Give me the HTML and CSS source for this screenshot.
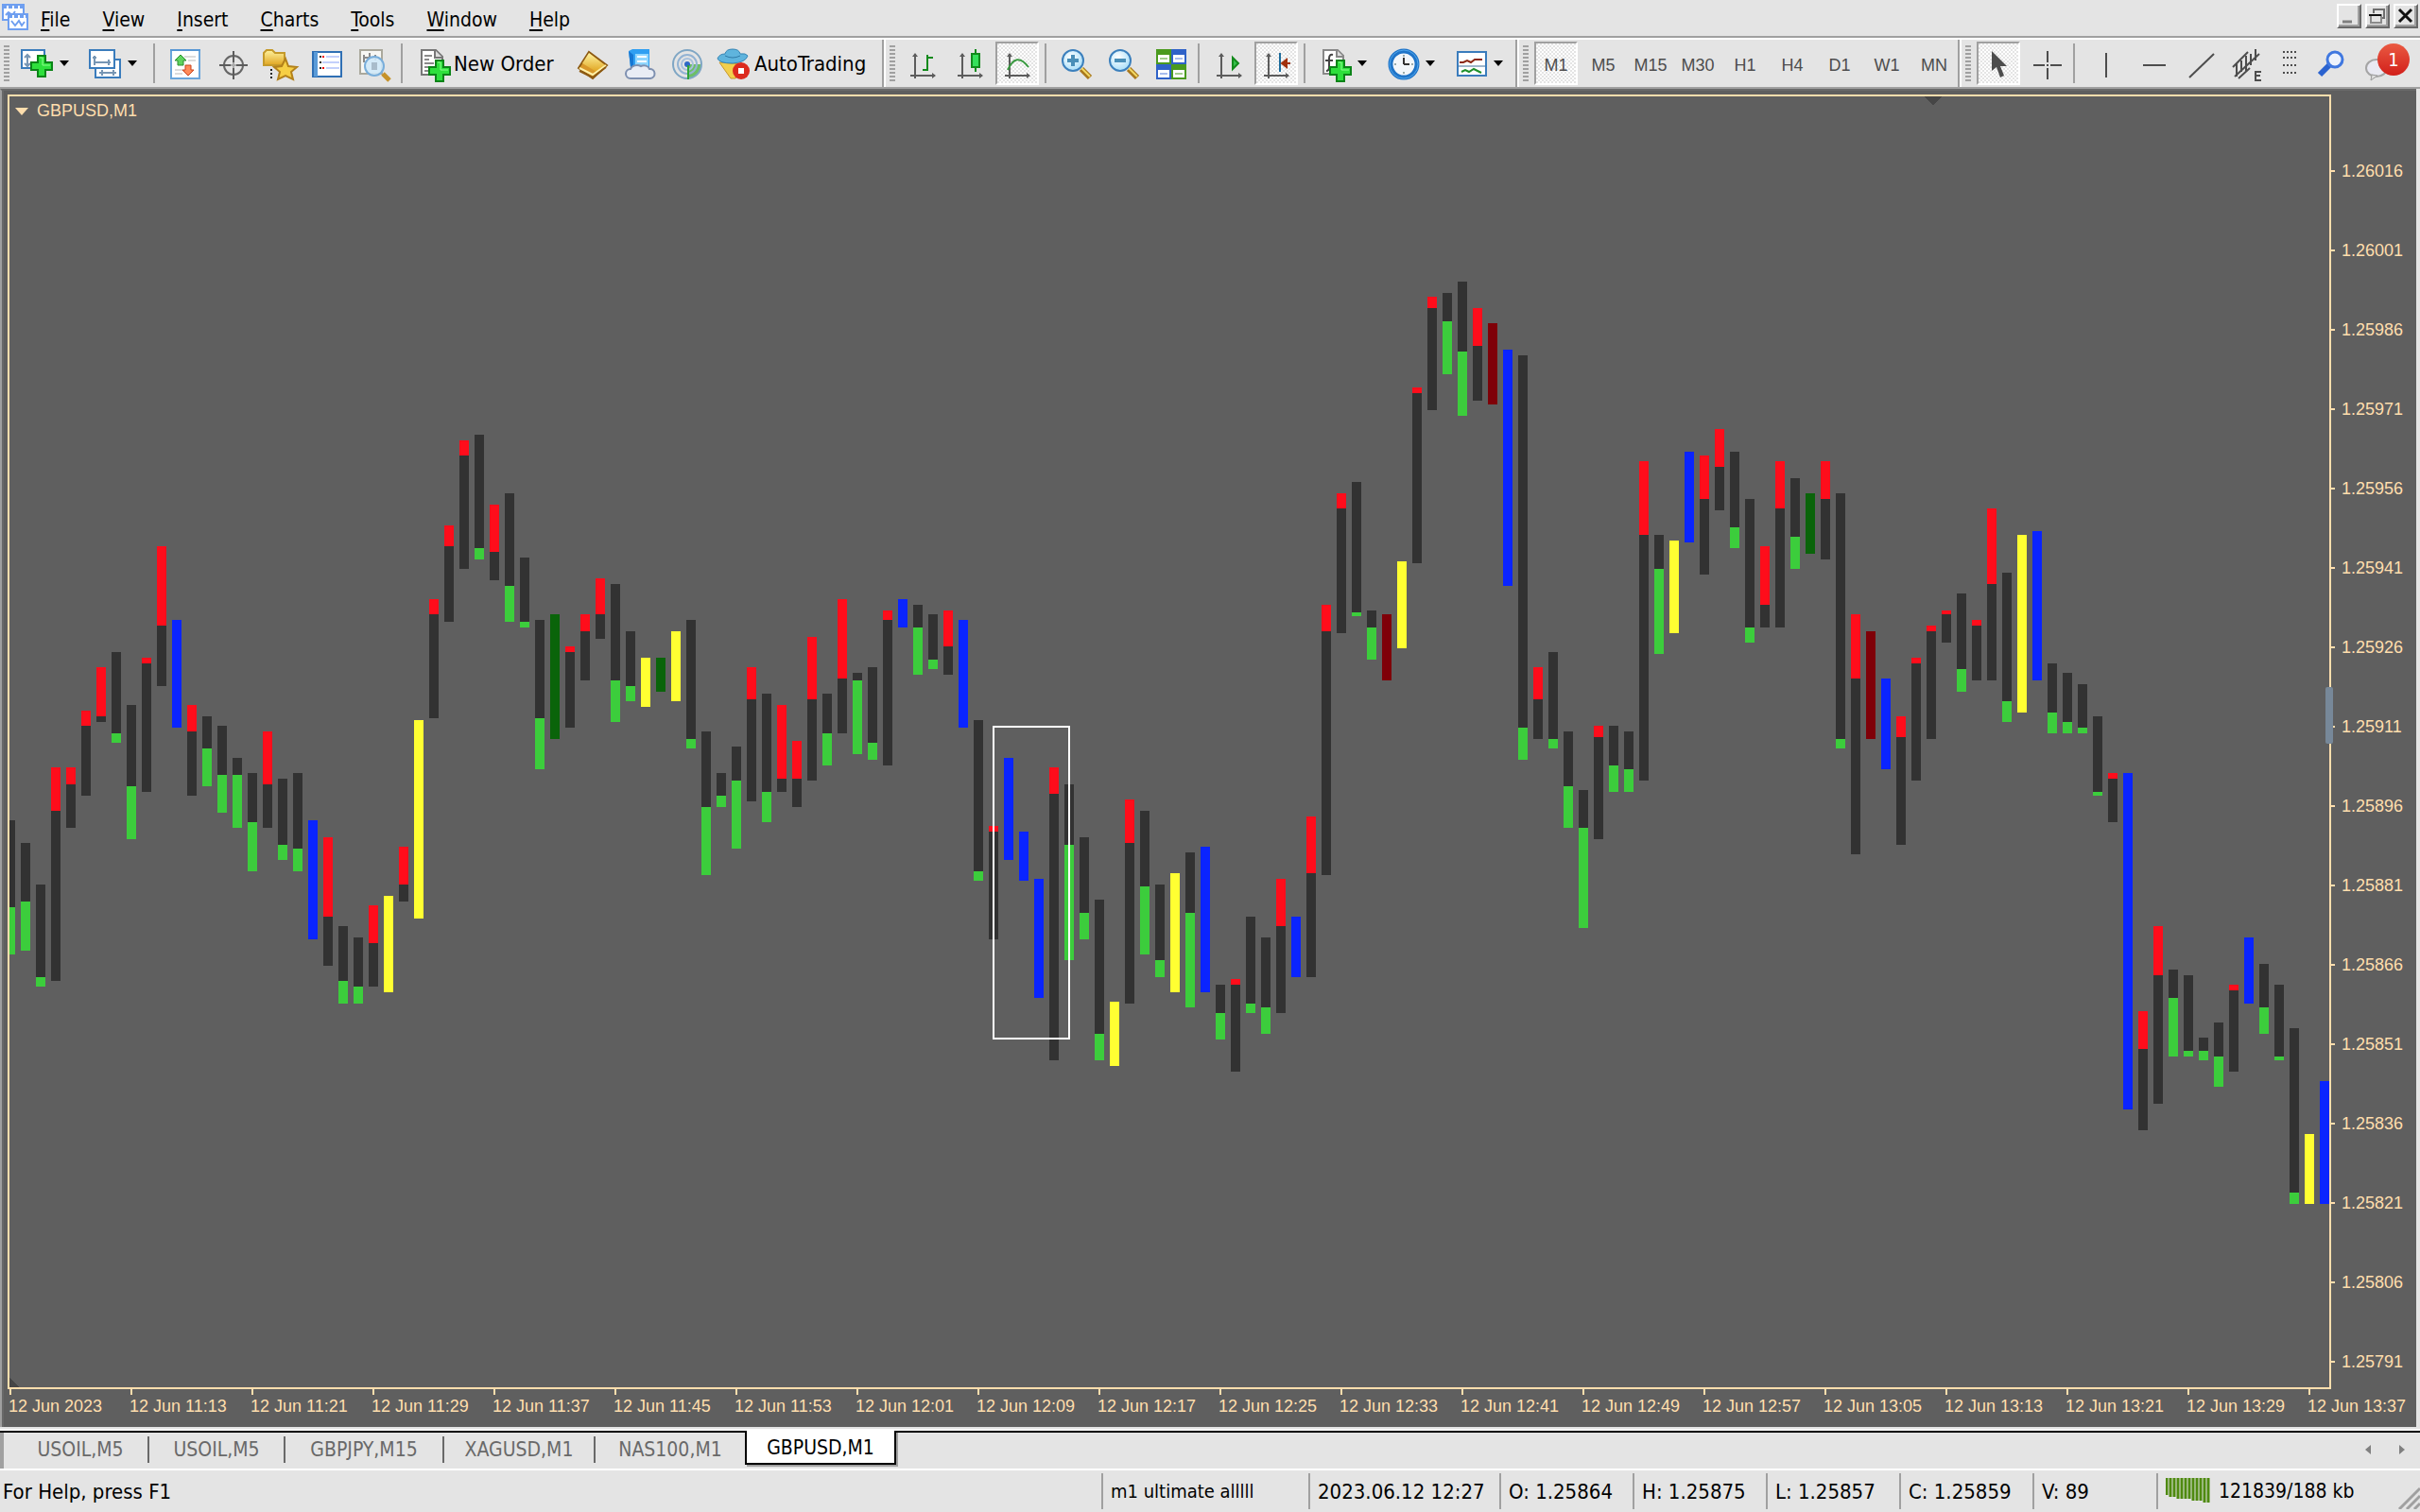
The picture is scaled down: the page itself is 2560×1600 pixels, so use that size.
FILE: index.html
```
<!DOCTYPE html>
<html lang="en">
<head>
    <meta charset="UTF-8">
    <meta name="viewport" content="width=device-width, initial-scale=1.0">
    <title>GBPUSD,M1</title>
    <link rel="stylesheet" href="styles.css">
</head>
<body>

    <!-- shared icon parts -->
    <svg class="defs" width="0" height="0">
        <defs>
            <linearGradient id="blueBar" x1="0" y1="0" x2="1" y2="0">
                <stop offset="0" stop-color="#6fb0e8"/>
                <stop offset="1" stop-color="#2f6fb4"/>
            </linearGradient>
            <linearGradient id="gold" x1="0" y1="0" x2="0" y2="1">
                <stop offset="0" stop-color="#fff3a0"/>
                <stop offset="1" stop-color="#e0a520"/>
            </linearGradient>
            <radialGradient id="lens" cx="0.4" cy="0.35" r="0.7">
                <stop offset="0" stop-color="#ffffff"/>
                <stop offset="1" stop-color="#a5ddf8"/>
            </radialGradient>
            <symbol id="plus" viewBox="0 0 24 24">
                <path d="M8 1h8v7h7v8h-7v7H8v-7H1V8h7z" fill="#2ee03c" stroke="#0b8418" stroke-width="2"/>
                <path d="M10 3h3v8h8" fill="none" stroke="#8dff8d" stroke-width="1"/>
            </symbol>
            <symbol id="axes" viewBox="0 0 36 36">
                <path d="M10 8v26M5 31h26" fill="none" stroke="#5c5c5c" stroke-width="2"/>
                <path d="M7 11l3-4 3 4zM28 28l4 3-4 3z" fill="#5c5c5c"/>
            </symbol>
            <symbol id="magnifier" viewBox="0 0 36 36">
                <path d="M24 24l9 9" stroke="#a9781c" stroke-width="6"/>
                <path d="M24 23l9 9" stroke="#f3d964" stroke-width="2"/>
                <circle cx="15" cy="15" r="11" fill="url(#lens)" stroke="#3c80bd" stroke-width="2"/>
            </symbol>
        </defs>
    </svg>

    <header class="menubar">
        <svg class="app-icon" width="32" height="36" viewBox="0 0 32 36">
            <rect x="3" y="5" width="22" height="16" fill="#fff" stroke="#6f9ff0" stroke-width="2"/>
            <path d="M3 7h22" stroke="#6f9ff0" stroke-width="4" stroke-dasharray="4 2"/>
            <path d="M6 16l3-3 4 3 3-4" fill="none" stroke="#6f9ff0" stroke-width="2"/>
            <rect x="9" y="15" width="20" height="16" fill="#fff" stroke="#6f9ff0" stroke-width="2"/>
            <path d="M9 17h20" stroke="#6f9ff0" stroke-width="4" stroke-dasharray="4 2"/>
            <path d="M12 22l4 5 4-5 3 5 3-4" fill="none" stroke="#6f9ff0" stroke-width="2"/>
        </svg>
        <nav class="menu">
            <button><u>F</u>ile</button>
            <button><u>V</u>iew</button>
            <button><u>I</u>nsert</button>
            <button><u>C</u>harts</button>
            <button><u>T</u>ools</button>
            <button><u>W</u>indow</button>
            <button><u>H</u>elp</button>
        </nav>
        <div class="window-buttons">
            <button aria-label="Minimize"><svg width="22" height="22" viewBox="0 0 22 22"><path d="M4 17h10" stroke="#808080" stroke-width="3"/></svg></button>
            <button aria-label="Restore"><svg width="22" height="22" viewBox="0 0 22 22"><path d="M7 8V4h11v9h-4" fill="none" stroke="#6e6e6e" stroke-width="2"/><path d="M3 10h12v8H4v-8" fill="none" stroke="#8a8a8a" stroke-width="2"/><path d="M2 10h13" stroke="#111" stroke-width="2"/></svg></button>
            <button aria-label="Close"><svg width="22" height="22" viewBox="0 0 22 22"><path d="M4 4l13 13M17 4L4 17" stroke="#111" stroke-width="3"/></svg></button>
        </div>
    </header>

    <div class="toolbars">
        <div class="toolbar">
            <span class="grip"></span>
            <button class="tool drop" aria-label="New chart">
                <svg class="icon" viewBox="0 0 36 36">
                    <rect x="2" y="4" width="24" height="19" fill="#fff" stroke="#3a7cbc" stroke-width="2"/>
                    <path d="M1 5h26" stroke="url(#blueBar)" stroke-width="4"/>
                    <path d="M8 9v12M5 12l3-3 3 3M5 18l3 3 3-3" fill="none" stroke="#7796b4" stroke-width="2"/>
                    <use href="#plus" x="11" y="9" width="24" height="24"/>
                </svg>
                <i class="arrow"></i>
            </button>
            <button class="tool drop" aria-label="Profiles">
                <svg class="icon" viewBox="0 0 36 36">
                    <rect x="8" y="14" width="26" height="19" fill="#fff" stroke="#3a7cbc" stroke-width="2"/>
                    <path d="M12 28h18M15 25v6M27 25v6" stroke="#7796b4" stroke-width="2"/>
                    <rect x="2" y="4" width="26" height="19" fill="#fff" stroke="#3a7cbc" stroke-width="2"/>
                    <path d="M1 5h28" stroke="url(#blueBar)" stroke-width="4"/>
                    <path d="M7 10v10M5 12h4M6 17h18M22 14v6" fill="none" stroke="#7796b4" stroke-width="2"/>
                </svg>
                <i class="arrow"></i>
            </button>
            <span class="sep"></span>
            <button class="tool" aria-label="Market Watch">
                <svg class="icon" viewBox="0 0 36 36">
                    <rect x="4" y="4" width="30" height="30" fill="#fff" stroke="#6aa6dc" stroke-width="2"/>
                    <path d="M3 4h32" stroke="#5797d4" stroke-width="2"/>
                    <path d="M18 11h12M22 15h8M8 25h8M8 29h8" stroke="#dcdcdc" stroke-width="2"/>
                    <path d="M14 9l6 6h-3v5h-6v-5H8z" fill="#5fd35f" stroke="#2a8f2e" stroke-width="1"/>
                    <path d="M22 31l6-6h-3v-5h-6v5h-3z" fill="#ff8a5a" stroke="#c8431c" stroke-width="1"/>
                </svg>
            </button>
            <button class="tool" aria-label="Data Window">
                <svg class="icon" viewBox="0 0 36 36">
                    <circle cx="20" cy="20" r="10" fill="none" stroke="#666" stroke-width="2"/>
                    <path d="M20 5v12M20 23v12M5 20h12M23 20h12" stroke="#5c5c5c" stroke-width="2"/>
                    <path d="M20 17v6M17 20h6" stroke="#aaa" stroke-width="2"/>
                </svg>
            </button>
            <button class="tool" aria-label="Navigator">
                <svg class="icon" viewBox="0 0 36 36">
                    <path d="M2 20V7l3-3h6l3 3h10v13z" fill="url(#gold)" stroke="#c59a2a" stroke-width="2"/>
                    <path d="M10 24v10" stroke="#222" stroke-width="2" stroke-dasharray="2 2"/>
                    <path d="M25 13l3 8 9 1-6 5 2 8-8-4-8 4 2-8-6-5 8-1z" fill="#f6cf45" stroke="#b3811b" stroke-width="2"/>
                </svg>
            </button>
            <button class="tool" aria-label="Terminal">
                <svg class="icon" viewBox="0 0 36 36">
                    <rect x="4" y="6" width="30" height="26" fill="#fff" stroke="#2f6fb4" stroke-width="2"/>
                    <path d="M7 6v26" stroke="#5a9bd8" stroke-width="4"/>
                    <path d="M11 11h2M11 17h2M11 23h2" stroke="#222" stroke-width="2"/>
                    <path d="M14 11h2M14 23h2" stroke="#e00" stroke-width="2"/>
                    <path d="M18 11h14M14 17h18M18 23h14" stroke="#c3d0fb" stroke-width="2"/>
                </svg>
            </button>
            <button class="tool" aria-label="Strategy Tester">
                <svg class="icon" viewBox="0 0 36 36">
                    <rect x="4" y="4" width="23" height="25" fill="#f7f7f4" stroke="#aaa89c" stroke-width="2"/>
                    <path d="M8 9v8M14 7v6M20 9v6M8 12h12" stroke="#8a8a8a" stroke-width="2"/>
                    <path d="M28 29l7 7" stroke="#c6922a" stroke-width="5"/>
                    <circle cx="19" cy="21" r="10" fill="#cfe8f8" fill-opacity="0.9" stroke="#79aedb" stroke-width="2"/>
                    <path d="M16 17h6v8h-6z" fill="#a9bccb"/>
                </svg>
            </button>
            <span class="sep"></span>
            <button class="tool wide order">
                <svg class="icon" viewBox="0 0 36 36">
                    <path d="M6 4h15l7 7v19H6z" fill="#fff" stroke="#777" stroke-width="2"/>
                    <path d="M20 4v8h8" fill="#ddd" stroke="#777" stroke-width="2"/>
                    <path d="M9 10h8M9 14h5M9 18h10M9 22h6M9 26h6" stroke="#8a8a8a" stroke-width="2"/>
                    <use href="#plus" x="13" y="14" width="24" height="24"/>
                </svg>
                <span>New Order</span>
            </button>
            <button class="tool" aria-label="MetaEditor">
                <svg class="icon" viewBox="0 0 36 36">
                    <path d="M4 23L15 6l19 14-15 14z" fill="#d9982a" stroke="#8d5a12" stroke-width="2"/>
                    <path d="M8 18l7-11 17 13-9 7z" fill="url(#gold)"/>
                    <path d="M5 23l14 7 14-10" fill="none" stroke="#fff0a8" stroke-width="2"/>
                    <path d="M5 26l14 7 14-11" fill="none" stroke="#8d5a12" stroke-width="2"/>
                </svg>
            </button>
            <button class="tool" aria-label="Virtual Hosting">
                <svg class="icon" viewBox="0 0 36 36">
                    <path d="M7 5l4-2h18v19H9z" fill="#2f9ff2"/>
                    <path d="M7 5l5 4v13H9z" fill="#1677d3"/>
                    <path d="M14 8h14v14H14z" fill="#8fd6ff"/>
                    <path d="M16 11h10M16 16h10" stroke="#fff" stroke-width="2"/>
                    <path d="M9 34a5 5 0 0 1 0-10 7 5 0 0 1 11-3 6 5 0 0 1 9 3 5 5 0 0 1 1 10z" fill="#e9edf5" stroke="#7e90b0" stroke-width="2"/>
                </svg>
            </button>
            <button class="tool" aria-label="Signals">
                <svg class="icon" viewBox="0 0 36 36">
                    <path d="M20 19V34A15 15 0 0 0 34 19z" fill="#6cbf66"/>
                    <circle cx="19" cy="19" r="15" fill="none" stroke="#7fa6c4" stroke-width="2"/>
                    <circle cx="19" cy="19" r="10" fill="none" stroke="#93b3d3" stroke-width="2"/>
                    <circle cx="19" cy="19" r="6" fill="none" stroke="#a8c0dc" stroke-width="2"/>
                    <circle cx="19" cy="19" r="3" fill="#2f68c6"/>
                    <path d="M20 20v15" stroke="#2fa33a" stroke-width="2"/>
                </svg>
            </button>
            <button class="tool wide auto">
                <svg class="icon" viewBox="0 0 36 36">
                    <path d="M3 17l24 2 3 6-10 9h-5z" fill="#f2cf4c" stroke="#c8982a" stroke-width="1"/>
                    <path d="M1 13q2-5 8-5 1-5 8-5t8 5q6-1 8 2-2 7-16 8-14 0-16-5z" fill="#5fb4dd" stroke="#3585b5" stroke-width="1"/>
                    <path d="M9 10q8 4 16 0" fill="none" stroke="#2f7ba8" stroke-width="1"/>
                    <circle cx="26" cy="26" r="9" fill="#dc2a1e"/>
                    <rect x="23" y="23" width="6" height="6" fill="#fff"/>
                </svg>
                <span>AutoTrading</span>
            </button>
        </div>

        <div class="toolbar">
            <span class="grip"></span>
            <button class="tool" aria-label="Bar Chart">
                <svg class="icon" viewBox="0 0 36 36">
                    <use href="#axes" width="36" height="36"/>
                    <path d="M23 9v17M24 12h5M18 25h4" fill="none" stroke="#128a1c" stroke-width="2"/>
                </svg>
            </button>
            <button class="tool" aria-label="Candlesticks">
                <svg class="icon" viewBox="0 0 36 36">
                    <use href="#axes" width="36" height="36"/>
                    <path d="M24 3v24" stroke="#128a1c" stroke-width="2"/>
                    <rect x="20" y="8" width="8" height="14" fill="#35e05a" stroke="#128a1c" stroke-width="2"/>
                </svg>
            </button>
            <button class="tool pressed" aria-label="Line Chart">
                <svg class="icon" viewBox="0 0 36 36">
                    <use href="#axes" width="36" height="36"/>
                    <path d="M8 25q9-20 22-3" fill="none" stroke="#3b9a42" stroke-width="2"/>
                </svg>
            </button>
            <span class="sep"></span>
            <button class="tool" aria-label="Zoom In">
                <svg class="icon" viewBox="0 0 36 36">
                    <use href="#magnifier" width="36" height="36"/>
                    <path d="M15 9v12M9 15h12" stroke="#4a8fb8" stroke-width="4"/>
                </svg>
            </button>
            <button class="tool" aria-label="Zoom Out">
                <svg class="icon" viewBox="0 0 36 36">
                    <use href="#magnifier" width="36" height="36"/>
                    <path d="M9 15h12" stroke="#4a8fb8" stroke-width="4"/>
                </svg>
            </button>
            <button class="tool" aria-label="Tile Windows">
                <svg class="icon" viewBox="0 0 36 36">
                    <path d="M3 3h16v16H3zM19 19h16v16H19z" fill="#4a9a1e"/>
                    <path d="M19 3h16v16H19zM3 19h16v16H3z" fill="#2f62c8"/>
                    <path d="M5 9h12v8H5zM21 9h12v8H21zM5 25h12v8H5zM21 25h12v8H21z" fill="#fff"/>
                    <path d="M7 13h8M23 29h8" stroke="#a4cf8e" stroke-width="2"/>
                    <path d="M23 13h8M7 29h8" stroke="#a8bdee" stroke-width="2"/>
                </svg>
            </button>
            <span class="sep"></span>
            <button class="tool" aria-label="Auto Scroll">
                <svg class="icon" viewBox="0 0 36 36">
                    <use href="#axes" width="36" height="36"/>
                    <path d="M22 12l6 6-6 6z" fill="#35c04a" stroke="#128a1c" stroke-width="2"/>
                </svg>
            </button>
            <button class="tool pressed" aria-label="Chart Shift">
                <svg class="icon" viewBox="0 0 36 36">
                    <use href="#axes" width="36" height="36"/>
                    <path d="M22 7v20" stroke="#1c6c9c" stroke-width="2"/>
                    <path d="M33 18h-8M29 14l-5 4 5 4z" stroke="#a1300c" stroke-width="2" fill="#a1300c"/>
                </svg>
            </button>
            <span class="sep"></span>
            <button class="tool drop" aria-label="Indicators">
                <svg class="icon" viewBox="0 0 36 36">
                    <path d="M6 4h15l6 6v19H6z" fill="#fff" stroke="#888" stroke-width="2"/>
                    <path d="M20 4v7h7" fill="#ddd" stroke="#888" stroke-width="2"/>
                    <path d="M16 9q-4-1-4 4v9q0 4-3 4M8 15h8" fill="none" stroke="#444" stroke-width="2"/>
                    <use href="#plus" x="12" y="14" width="24" height="24"/>
                </svg>
                <i class="arrow"></i>
            </button>
            <button class="tool drop" aria-label="Periodicity">
                <svg class="icon" viewBox="0 0 36 36">
                    <circle cx="19" cy="19" r="14" fill="#f2f6fa" stroke="#1f74c8" stroke-width="5"/>
                    <circle cx="19" cy="19" r="15" fill="none" stroke="#4fa6ec" stroke-width="1"/>
                    <path d="M19 19v-7M19 19h6" stroke="#333" stroke-width="2"/>
                    <path d="M19 9v2M19 27v2M9 19h2M27 19h2" stroke="#9aa" stroke-width="2"/>
                </svg>
                <i class="arrow"></i>
            </button>
            <button class="tool drop" aria-label="Templates">
                <svg class="icon" viewBox="0 0 36 36">
                    <rect x="4" y="6" width="30" height="25" fill="#fff" stroke="#3a7cbc" stroke-width="2"/>
                    <path d="M3 7h32" stroke="url(#blueBar)" stroke-width="4"/>
                    <path d="M6 17h4l4-2 4 2 4-3h8" fill="none" stroke="#8c2814" stroke-width="2"/>
                    <path d="M5 21h28" stroke="#9fb6cc" stroke-width="2"/>
                    <path d="M8 27l4-2 4 2 5-3 4 2 4 2" fill="none" stroke="#1d8f2a" stroke-width="2"/>
                </svg>
                <i class="arrow"></i>
            </button>
        </div>

        <div class="toolbar">
            <span class="grip"></span>
            <button class="tool period pressed">M1</button>
            <button class="tool period">M5</button>
            <button class="tool period">M15</button>
            <button class="tool period">M30</button>
            <button class="tool period">H1</button>
            <button class="tool period">H4</button>
            <button class="tool period">D1</button>
            <button class="tool period">W1</button>
            <button class="tool period">MN</button>
        </div>

        <div class="toolbar last">
            <span class="grip"></span>
            <button class="tool pressed" aria-label="Cursor">
                <svg class="icon" viewBox="0 0 36 36">
                    <path d="M11 5v21l5-4 4 11 4-2-4-10h7z" fill="#4d4d4d"/>
                </svg>
            </button>
            <button class="tool" aria-label="Crosshair">
                <svg class="icon" viewBox="0 0 36 36">
                    <path d="M20 5v12M20 23v12M5 20h12M23 20h12M19 20h2" stroke="#4d4d4d" stroke-width="2"/>
                </svg>
            </button>
            <span class="sep"></span>
            <button class="tool" aria-label="Vertical Line">
                <svg class="icon" viewBox="0 0 36 36"><path d="M20 7v26" stroke="#4d4d4d" stroke-width="2"/></svg>
            </button>
            <button class="tool" aria-label="Horizontal Line">
                <svg class="icon" viewBox="0 0 36 36"><path d="M9 20h24" stroke="#4d4d4d" stroke-width="2"/></svg>
            </button>
            <button class="tool" aria-label="Trendline">
                <svg class="icon" viewBox="0 0 36 36"><path d="M8 33L34 8" stroke="#4d4d4d" stroke-width="2"/></svg>
            </button>
            <button class="tool" aria-label="Equidistant Channel">
                <svg class="icon" viewBox="0 0 36 36">
                    <path d="M4 22L20 6M6 32L32 8M8 18v14M13 15v12M18 10v16M23 8v12M28 3v12M10 34L22 23" fill="none" stroke="#4d4d4d" stroke-width="2"/>
                    <path d="M34 27h-6v9h6M28 31h5" fill="none" stroke="#4d4d4d" stroke-width="2"/>
                </svg>
            </button>
            <button class="tool narrow" aria-label="More tools">
                <svg class="icon" viewBox="0 0 36 36">
                    <path d="M12 6h16M12 12h16M12 20h16M12 28h16" stroke="#4d4d4d" stroke-width="2" stroke-dasharray="2 2"/>
                </svg>
            </button>
            <button class="tool" aria-label="Search">
                <svg class="icon" viewBox="0 0 36 36">
                    <path d="M16 20L6 30" stroke="#2a62cf" stroke-width="6"/>
                    <circle cx="22" cy="14" r="8" fill="#eef3fc" stroke="#4078e0" stroke-width="3"/>
                </svg>
            </button>
            <button class="tool" aria-label="Messages">
                <svg class="icon" viewBox="0 0 36 36">
                    <ellipse cx="16" cy="23" rx="11" ry="9" fill="#e9e9f2" stroke="#a5a5a5" stroke-width="2"/>
                    <path d="M11 30l-1 6 7-5z" fill="#ddd" stroke="#999" stroke-width="1"/>
                </svg>
                <span class="badge">1</span>
            </button>
        </div>
    </div>

    <main class="chart">
        <div class="plot-row">
            <div class="plot">
                <svg id="bars" class="bars" viewBox="10 102 2454 1366" preserveAspectRatio="none"></svg>
                <div class="symbol"><i class="symbol-arrow"></i>GBPUSD,M1</div>
                <span class="scroll-mark"></span>
            </div>
            <div class="prices" id="prices"></div>
        </div>
        <div class="times" id="times"></div>
    </main>

    <nav class="tabs">
        <button class="tab">USOIL,M5</button>
        <button class="tab">USOIL,M5</button>
        <button class="tab wide">GBPJPY,M15</button>
        <button class="tab medium">XAGUSD,M1</button>
        <button class="tab medium">NAS100,M1</button>
        <button class="tab medium active">GBPUSD,M1</button>
        <div class="tab-scroll">
            <button class="left" aria-label="Scroll left"></button>
            <button class="right" aria-label="Scroll right"></button>
        </div>
    </nav>

    <footer class="status">
        <span class="help">For Help, press F1</span>
        <span class="cell profile">m1 ultimate alllll</span>
        <span class="cell date">2023.06.12 12:27</span>
        <span class="cell">O: 1.25864</span>
        <span class="cell">H: 1.25875</span>
        <span class="cell">L: 1.25857</span>
        <span class="cell">C: 1.25859</span>
        <span class="cell volume">V: 89</span>
        <span class="cell traffic">
            <svg width="48" height="28" viewBox="0 0 48 28">
                <path d="M1 0v18M5 0v20M9 0v20M13 0v22M17 0v22M21 0v22M25 0v22M29 0v24M33 0v24M37 0v24M41 0v26M45 0v26" stroke="#4f8a10" stroke-width="3"/>
            </svg>
            121839/188 kb
            <svg class="resize" width="24" height="24" viewBox="0 0 24 24"><path d="M2 24L24 2M10 24L24 10M18 24l6-6" stroke="#a0a0a0" stroke-width="3"/></svg>
        </span>
    </footer>

    <script src="script.js"></script>
</body>
</html>
```
FILE: styles.css
```
* {
    box-sizing: border-box;
}

body {
    margin: 0;
    height: 100vh;
    display: flex;
    flex-direction: column;
    background: #e4e4e4;
    color: #000;
    font-family: "DejaVu Sans Condensed", "DejaVu Sans", sans-serif;
    font-size: 21px;
    overflow: hidden;
}

button {
    margin: 0;
    padding: 0;
    border: 0;
    background: none;
    color: inherit;
    font: inherit;
}

.defs {
    position: absolute;
}

/* menu */
.menubar {
    display: flex;
    flex: none;
    height: 40px;
    border-bottom: 2px solid #a0a0a0;
}

.menu {
    display: flex;
    flex: 1;
    padding-top: 4px;
}

.menu button {
    padding: 0 17px;
}

.menu button:first-child {
    padding-left: 11px;
}

.menu u {
    text-underline-offset: 3px;
    text-decoration-thickness: 2px;
}

.window-buttons {
    display: flex;
    gap: 4px;
    padding: 4px 2px 0 0;
}

.window-buttons button {
    width: 26px;
    height: 26px;
    border: 2px solid;
    border-color: #fff #696969 #696969 #fff;
    box-shadow: inset -2px -2px 0 #a0a0a0;
}

.window-buttons svg {
    display: block;
}

/* toolbars */
.toolbars {
    display: flex;
    flex: none;
    height: 54px;
    border-top: 2px solid #fff;
    border-bottom: 2px solid #a0a0a0;
}

.toolbar {
    display: flex;
    border-right: 2px solid #a0a0a0;
    box-shadow: 2px 0 0 #fff;
    margin-right: 2px;
}

.toolbar.last {
    border: 0;
    box-shadow: none;
}

.grip {
    width: 6px;
    height: 38px;
    margin: 6px 4px;
    background: repeating-linear-gradient(#a0a0a0 0 2px, transparent 2px 4px);
}

.sep {
    width: 2px;
    height: 42px;
    margin: 4px 6px 0 4px;
    background: #a0a0a0;
}

.tool {
    position: relative;
    display: flex;
    align-items: center;
    justify-content: center;
    width: 46px;
    height: 46px;
    margin: 2px;
    border: 2px solid transparent;
}

.tool.drop {
    justify-content: flex-start;
    width: 68px;
    padding-left: 3px;
    gap: 6px;
}

.tool.wide {
    justify-content: flex-start;
    font-size: 22px;
    gap: 4px;
}

.tool.order {
    width: 165px;
    padding-left: 4px;
}

.tool.auto {
    width: 178px;
    padding-left: 3px;
}

.tool.narrow {
    width: 36px;
}

.tool.pressed {
    border-color: #a0a0a0 #fff #fff #a0a0a0;
    background: repeating-conic-gradient(#fff 0 25%, #e4e4e4 0 50%) 0 0 / 4px 4px;
}

.tool.period {
    font-family: "Liberation Sans", Arial, sans-serif;
    font-size: 18px;
    color: #4d4d4d;
    padding-top: 4px;
}

.icon {
    flex: none;
    width: 36px;
    height: 36px;
    overflow: visible;
}

.arrow {
    border: 5px solid transparent;
    border-top: 6px solid #000;
    border-bottom: 0;
}

.badge {
    position: absolute;
    top: 0;
    left: 20px;
    width: 34px;
    height: 34px;
    border-radius: 50%;
    background: linear-gradient(#ea5a42, #d21f1a);
    color: #fff;
    font-size: 20px;
    line-height: 34px;
    text-align: center;
}

/* chart window */
.chart {
    flex: 1;
    display: flex;
    flex-direction: column;
    min-height: 0;
    margin-right: 4px;
    padding: 4px 0 0 4px;
    background: #5f5f5f;
    border-top: 2px solid #696969;
    border-left: 2px solid #a0a0a0;
    box-shadow: inset 2px 0 0 #696969;
    color: #ffdead;
    font-family: "Liberation Sans", Arial, sans-serif;
    font-size: 18px;
}

.plot-row {
    flex: 1;
    display: flex;
    min-height: 0;
    margin-left: 2px;
}

.plot {
    position: relative;
    flex: 1;
    border: 2px solid #ffdead;
}

.bars {
    position: absolute;
    width: 100%;
    height: 100%;
    shape-rendering: crispEdges;
}

.bars .dark { fill: #323232; }
.bars .red { fill: #ff0d1b; }
.bars .green { fill: #3ccd3c; }
.bars .blue { fill: #0a24ff; }
.bars .yellow { fill: #ffff32; }
.bars .deepgreen { fill: #0a640a; }
.bars .maroon { fill: #7f0008; }
.bars .shift { fill: #464646; }

.bars .box {
    fill: none;
    stroke: #fff;
    stroke-width: 2;
}

.symbol {
    position: absolute;
    top: 5px;
    left: 6px;
    display: flex;
    align-items: center;
    gap: 9px;
}

.symbol-arrow {
    border: 7px solid transparent;
    border-top: 8px solid #ffdead;
    border-bottom: 0;
}

.scroll-mark {
    position: absolute;
    top: 625px;
    right: -4px;
    width: 8px;
    height: 60px;
    border-radius: 2px;
    background: #778899;
}

.prices {
    width: 90px;
    padding-top: 39px;
}

.price {
    display: flex;
    align-items: center;
    gap: 7px;
    height: 84px;
}

.price::before {
    content: "";
    width: 4px;
    height: 2px;
    background: #ffdead;
}

.times {
    display: flex;
    flex: none;
    height: 40px;
    margin-left: 3px;
    overflow: hidden;
}

.time {
    flex: 0 0 128px;
    white-space: nowrap;
    line-height: 24px;
}

.time::before {
    content: "";
    display: block;
    width: 2px;
    height: 6px;
    margin-left: 1px;
    background: #ffdead;
}

/* chart tabs */
.tabs {
    display: flex;
    flex: none;
    height: 44px;
    margin-top: 2px;
    border-top: 2px solid #fff;
    border-bottom: 2px solid #fff;
    box-shadow: inset 0 2px 0 #000, inset 4px 0 0 #a0a0a0;
    color: #696969;
    padding-left: 14px;
}

.tab {
    width: 144px;
    height: 28px;
    margin-top: 6px;
    border-right: 2px solid #696969;
    line-height: 28px;
}

.tab.wide {
    width: 168px;
}

.tab.medium {
    width: 160px;
}

.tab:nth-child(5) {
    border-color: transparent;
}

.tab.active {
    height: 36px;
    margin: 0 0 0 -2px;
    padding-top: 2px;
    border: 2px solid #000;
    border-top: 0;
    background: #fff;
    box-shadow: 2px 2px 0 #a0a0a0;
    color: #000;
}

.tab-scroll {
    display: flex;
    gap: 30px;
    align-items: center;
    margin-left: auto;
    padding-right: 16px;
}

.tab-scroll .left,
.tab-scroll .right {
    border: 5px solid transparent;
}

.tab-scroll .left {
    border-right: 6px solid #808080;
    border-left: 0;
}

.tab-scroll .right {
    border-left: 6px solid #808080;
    border-right: 0;
}

/* status bar */
.status {
    display: flex;
    flex: none;
    align-items: center;
    height: 44px;
    padding-left: 3px;
    font-size: 22px;
    white-space: nowrap;
}

.help {
    flex: 1;
}

.cell {
    display: flex;
    align-items: center;
    width: 141px;
    height: 38px;
    padding-left: 8px;
    border-left: 2px solid #a0a0a0;
}

.cell.profile {
    width: 219px;
    font-size: 20px;
}

.cell.date {
    width: 202px;
}

.cell.volume {
    width: 131px;
}

.cell.traffic {
    width: 279px;
    gap: 8px;
    font-size: 21px;
}

.resize {
    margin: auto 0 0 auto;
}
```
FILE: script.js
```
// r: red top, g: green bottom -> [type, top, split, bottom]
// b, y, d, m: one colour -> [type, top, bottom]
const bars = [
    ['g', 868, 960, 1010], ['g', 892, 954, 1006], ['g', 936, 1034, 1044], ['r', 812, 858, 1038],
    ['r', 812, 830, 876], ['r', 752, 768, 842], ['r', 706, 758, 764], ['g', 690, 776, 786],
    ['g', 746, 832, 888], ['r', 696, 702, 838], ['r', 578, 662, 726], ['b', 656, 770],
    ['r', 746, 774, 842], ['g', 758, 792, 832], ['g', 768, 820, 860], ['g', 802, 820, 876],
    ['g', 818, 870, 922], ['r', 774, 830, 876], ['g', 824, 894, 910], ['g', 818, 898, 922],
    ['b', 868, 994], ['r', 886, 970, 1022], ['g', 980, 1038, 1062], ['g', 992, 1044, 1062],
    ['r', 958, 998, 1044], ['y', 948, 1050], ['r', 896, 936, 954], ['y', 762, 972],
    ['r', 634, 650, 760], ['r', 556, 578, 658], ['r', 466, 482, 602], ['g', 460, 580, 592],
    ['r', 534, 584, 614], ['g', 522, 620, 658], ['g', 590, 658, 664], ['g', 656, 760, 814],
    ['d', 650, 782], ['r', 684, 690, 770], ['r', 650, 668, 720], ['r', 612, 650, 676],
    ['g', 618, 720, 764], ['g', 668, 726, 742], ['y', 696, 748], ['d', 696, 732],
    ['y', 668, 742], ['g', 656, 782, 792], ['g', 774, 854, 926], ['g', 818, 842, 854],
    ['g', 790, 826, 898], ['r', 706, 740, 848], ['g', 734, 838, 870], ['r', 746, 824, 838],
    ['r', 784, 824, 854], ['r', 674, 740, 826], ['g', 734, 776, 810], ['r', 634, 718, 776],
    ['g', 712, 720, 798], ['g', 706, 786, 804], ['r', 646, 656, 810], ['b', 634, 664],
    ['g', 640, 664, 714], ['g', 650, 698, 708], ['r', 646, 684, 714], ['b', 656, 770],
    ['g', 762, 922, 932], ['r', 874, 880, 994], ['b', 802, 910], ['b', 880, 932],
    ['b', 930, 1056], ['r', 812, 840, 1122], ['g', 830, 894, 1016], ['g', 886, 966, 994],
    ['g', 952, 1094, 1122], ['y', 1060, 1128], ['r', 846, 892, 1062], ['g', 858, 938, 1010],
    ['g', 936, 1016, 1034], ['y', 924, 1050], ['g', 902, 966, 1066], ['b', 896, 1050],
    ['g', 1042, 1072, 1100], ['r', 1036, 1042, 1134], ['g', 970, 1062, 1072], ['g', 992, 1066, 1094],
    ['r', 930, 980, 1072], ['b', 970, 1034], ['r', 864, 924, 1034], ['r', 640, 668, 926],
    ['r', 522, 538, 670], ['g', 510, 648, 652], ['g', 646, 664, 698], ['m', 650, 720],
    ['y', 594, 686], ['r', 410, 416, 596], ['r', 314, 326, 434], ['g', 310, 340, 396],
    ['g', 298, 372, 440], ['r', 326, 366, 424], ['m', 342, 428], ['b', 370, 620],
    ['g', 376, 770, 804], ['r', 706, 740, 782], ['g', 690, 782, 792], ['g', 774, 832, 876],
    ['g', 836, 876, 982], ['r', 768, 780, 888], ['g', 768, 810, 838], ['g', 774, 814, 838],
    ['r', 488, 566, 826], ['g', 566, 602, 692], ['y', 572, 670], ['b', 478, 574],
    ['r', 482, 528, 608], ['r', 454, 494, 540], ['g', 478, 558, 580], ['g', 528, 664, 680],
    ['r', 578, 640, 664], ['r', 488, 538, 664], ['g', 506, 568, 602], ['d', 522, 586],
    ['r', 488, 528, 592], ['g', 522, 782, 792], ['r', 650, 718, 904], ['m', 668, 782],
    ['b', 718, 814], ['r', 758, 780, 894], ['r', 696, 702, 826], ['r', 662, 668, 782],
    ['r', 646, 650, 680], ['g', 628, 708, 732], ['r', 656, 662, 720], ['r', 538, 618, 720],
    ['g', 606, 742, 764], ['y', 566, 754], ['b', 562, 720], ['g', 702, 754, 776],
    ['g', 712, 764, 776], ['g', 724, 770, 776], ['g', 758, 838, 842], ['r', 818, 824, 870],
    ['b', 818, 1174], ['r', 1070, 1110, 1196], ['r', 980, 1032, 1168], ['g', 1026, 1056, 1118],
    ['g', 1032, 1112, 1118], ['g', 1098, 1112, 1122], ['g', 1082, 1118, 1150], ['r', 1042, 1048, 1134],
    ['b', 992, 1062], ['g', 1020, 1066, 1094], ['g', 1042, 1118, 1122], ['g', 1088, 1262, 1274],
    ['y', 1200, 1274], ['b', 1144, 1274]
];

const colors = { b: 'blue', y: 'yellow', d: 'deepgreen', m: 'maroon' };

function rect(color, x, top, bottom) {
    return `<rect class="${color}" x="${x}" y="${top}" width="10" height="${bottom - top}"/>`;
}

function drawBars() {
    let html = '';
    bars.forEach((bar, index) => {
        const x = 6 + index * 16;
        if (bar[0] === 'r') {
            html += rect('red', x, bar[1], bar[2]) + rect('dark', x, bar[2], bar[3]);
        } else if (bar[0] === 'g') {
            html += rect('dark', x, bar[1], bar[2]) + rect('green', x, bar[2], bar[3]);
        } else {
            html += rect(colors[bar[0]], x, bar[1], bar[2]);
        }
    });
    html += '<rect class="box" x="1051" y="769" width="80" height="330"/>';
    html += '<path class="shift" d="M2036 102h18l-9 10zM10 1458l10 10H10z"/>';
    document.getElementById('bars').innerHTML = html;
}

function drawPrices() {
    let html = '';
    for (let price = 126016; price >= 125791; price -= 15) {
        html += `<div class="price">${(price / 100000).toFixed(5)}</div>`;
    }
    document.getElementById('prices').innerHTML = html;
}

function drawTimes() {
    let html = '<div class="time">12 Jun 2023</div>';
    for (let minute = 11 * 60 + 13; minute <= 13 * 60 + 37; minute += 8) {
        const mm = String(minute % 60).padStart(2, '0');
        html += `<div class="time">12 Jun ${Math.floor(minute / 60)}:${mm}</div>`;
    }
    document.getElementById('times').innerHTML = html;
}

drawBars();
drawPrices();
drawTimes();
```
